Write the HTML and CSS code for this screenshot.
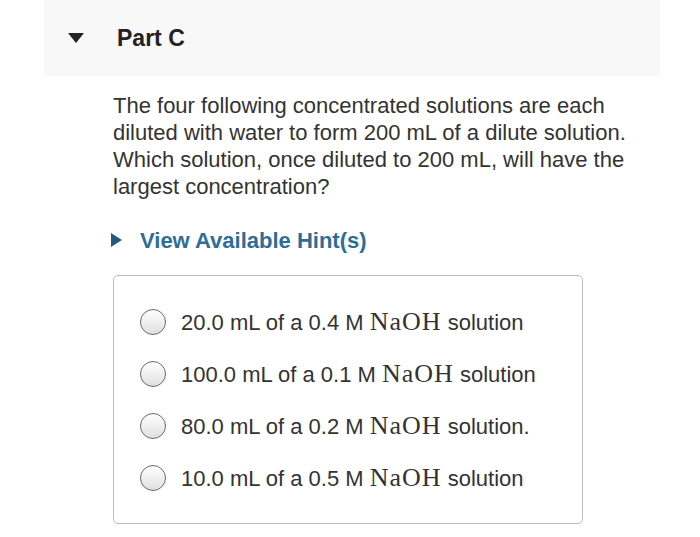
FILE: index.html
```html
<!DOCTYPE html>
<html lang="en">
<head>
    <meta charset="UTF-8">
    <title>Part C</title>
    <link rel="stylesheet" href="styles.css">
</head>
<body>
    <div class="part-header">
        <span class="toggle-down"></span>
        <h2>Part C</h2>
    </div>

    <div class="part-body">
        <p class="question">The four following concentrated solutions are each diluted with water to form 200 mL of a dilute solution. Which solution, once diluted to 200 mL, will have the largest concentration?</p>

        <div class="hint-link">
            <span class="toggle-right"></span>
            <span>View Available Hint(s)</span>
        </div>

        <div class="choices">
            <label class="choice">
                <span class="radio"></span>
                <span>20.0 mL of a 0.4 M <span class="chem">NaOH</span> solution</span>
            </label>
            <label class="choice">
                <span class="radio"></span>
                <span>100.0 mL of a 0.1 M <span class="chem">NaOH</span> solution</span>
            </label>
            <label class="choice">
                <span class="radio"></span>
                <span>80.0 mL of a 0.2 M <span class="chem">NaOH</span> solution.</span>
            </label>
            <label class="choice">
                <span class="radio"></span>
                <span>10.0 mL of a 0.5 M <span class="chem">NaOH</span> solution</span>
            </label>
        </div>
    </div>
</body>
</html>
```

FILE: styles.css
```css
body {
    font-family: 'Liberation Sans', Arial, sans-serif;
    background-color: #fff;
    color: #333;
    margin: 0;
    padding: 0;
}

.part-header {
    margin-left: 44px;
    width: 616px;
    height: 76px;
    background-color: #f8f8f8;
    display: flex;
    align-items: center;
}

.toggle-down {
    width: 0;
    height: 0;
    margin-left: 24px;
    margin-right: 33px;
    border-left: 8px solid transparent;
    border-right: 8px solid transparent;
    border-top: 10px solid #222;
}

.part-header h2 {
    margin: 0;
    font-size: 23px;
    font-weight: bold;
    color: #222;
}

.part-body {
    padding-left: 113px;
    padding-top: 16px;
}

.question {
    width: 525px;
    margin: 0;
    font-size: 22px;
    line-height: 27px;
}

.hint-link {
    display: flex;
    align-items: center;
    height: 25px;
    margin-top: 28px;
    color: #2e6e96;
    font-size: 22px;
    font-weight: bold;
}

.toggle-right {
    width: 0;
    height: 0;
    margin-left: -2px;
    margin-right: 18px;
    margin-bottom: 2px;
    border-top: 7.5px solid transparent;
    border-bottom: 7.5px solid transparent;
    border-left: 11px solid #1f5a80;
}

.choices {
    width: 468px;
    margin-top: 22px;
    padding: 20px 0 19px;
    border: 1px solid #bdbdbd;
    border-radius: 5px;
}

.choice {
    display: flex;
    align-items: center;
    height: 52px;
    padding-left: 26px;
    font-size: 22px;
}

.radio {
    width: 24px;
    height: 24px;
    margin-right: 15px;
    border: 1px solid #6a6a6a;
    border-radius: 50%;
    background: linear-gradient(#fff, #e0e0e0);
}

.chem {
    font-family: 'Liberation Serif', 'Times New Roman', serif;
    font-size: 26px;
    letter-spacing: 1px;
}
```
